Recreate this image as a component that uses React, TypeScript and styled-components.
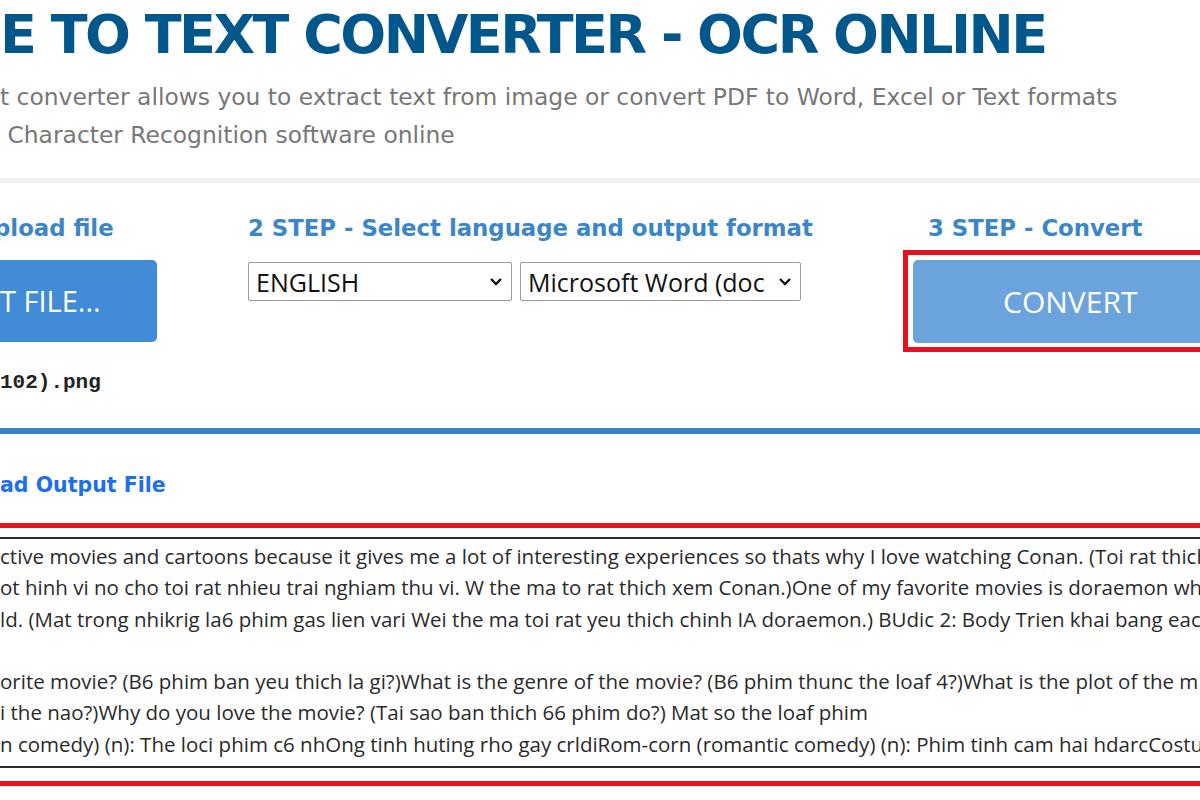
import styled, { createGlobalStyle } from 'styled-components'

const GlobalStyle = createGlobalStyle`
  html, body {
    margin: 0;
    padding: 0;
    background: #ffffff;
    overflow: hidden;
  }
`

const Page = styled.div`
  width: 1200px;
  height: 800px;
  overflow: hidden;
  font-family: 'DejaVu Sans', Verdana, sans-serif;
`

const Title = styled.h1`
  margin: 0;
  padding-top: 4px;
  height: 62px;
  font-size: 54px;
  line-height: 62px;
  font-weight: bold;
  color: #00578b;
  white-space: nowrap;
  letter-spacing: -2.5px;
`

const Subtitle = styled.p`
  margin: 0;
  padding-top: 12px;
  font-size: 23.4px;
  line-height: 38px;
  color: #777777;
  white-space: nowrap;
`

const Divider = styled.div`
  margin-top: 24px;
  height: 5px;
  background: #f1f1f1;
`

const Steps = styled.div`
  display: flex;
  height: 245px;
`

const Column = styled.div<{ $width?: number }>`
  display: flex;
  flex-direction: column;
  ${(p) => (p.$width ? `width: ${p.$width}px; flex: none;` : 'flex: 1;')}
`

const StepTitle = styled.div<{ $indent?: number }>`
  margin-top: 30px;
  text-indent: ${(p) => p.$indent ?? 0}px;
  height: 30px;
  font-size: 22.8px;
  line-height: 30px;
  font-weight: bold;
  color: #3b86c8;
  white-space: nowrap;
`

const SelectFile = styled.div`
  margin-top: 17px;
  width: 157px;
  height: 82px;
  box-sizing: border-box;
  background: #428bd6;
  border-radius: 0 5px 5px 0;
  color: #ffffff;
  font-family: 'Open Sans', 'Noto Sans', sans-serif;
  font-size: 29px;
  line-height: 82px;
  white-space: nowrap;
  overflow: hidden;
`

const FileName = styled.div`
  margin-top: 30px;
  font-family: 'Liberation Mono', 'Courier New', monospace;
  font-weight: bold;
  font-size: 21px;
  line-height: 22px;
  color: #222222;
`

const SelectRow = styled.div`
  display: flex;
  gap: 8px;
  margin-top: 19px;
`

const Dropdown = styled.div<{ $width: number }>`
  display: flex;
  align-items: center;
  justify-content: space-between;
  width: ${(p) => p.$width}px;
  height: 39px;
  box-sizing: border-box;
  padding: 0 8px 0 7px;
  border: 1.5px solid #9a9a9a;
  border-radius: 2px;
  background: #ffffff;
  font-family: 'Open Sans', 'Noto Sans', sans-serif;
  font-size: 25px;
  color: #111111;
  white-space: nowrap;
  overflow: hidden;
`

const Chevron = () => (
  <svg width="14" height="10" viewBox="0 0 14 10" style={{ flex: 'none' }}>
    <path d="M2 2 L7 7 L12 2" fill="none" stroke="#111" strokeWidth="2.4" />
  </svg>
)

const ConvertFrame = styled.div`
  margin-top: 7px;
  height: 102px;
  box-sizing: border-box;
  border: 5px solid #e8101e;
  border-right: none;
  padding: 5px 0 4px 5px;
`

const ConvertButton = styled.div`
  height: 100%;
  background: #6ba4dd;
  border-radius: 5px 0 0 5px;
  color: #ffffff;
  font-family: 'Open Sans', 'Noto Sans', sans-serif;
  font-size: 30px;
  display: flex;
  align-items: center;
  padding-left: 90px;
`

const BlueBar = styled.div`
  height: 6px;
  background: #3a82c6;
`

const OutputLink = styled.div`
  margin-top: 36px;
  height: 30px;
  font-size: 20.5px;
  line-height: 30px;
  font-weight: bold;
  color: #1e6feb;
  white-space: nowrap;
`

const RedFrame = styled.div`
  margin-top: 23px;
  border-top: 5px solid #ea1320;
  border-bottom: 5px solid #ea1320;
  padding: 9px 0 13px;
`

const TextBox = styled.div`
  border-top: 2px solid #2a2a2a;
  border-bottom: 2px solid #2a2a2a;
  padding: 2px 0 6px;
  font-family: 'Open Sans', 'Noto Sans', sans-serif;
  font-size: 20.5px;
  line-height: 31.3px;
  color: #2a2a2a;
`

const TextLine = styled.div`
  height: 31.3px;
  white-space: pre;
  overflow: hidden;
`

const lines = [
  'ctive movies and cartoons because it gives me a lot of interesting experiences so thats why I love watching Conan. (Toi rat thich',
  'ot hinh vi no cho toi rat nhieu trai nghiam thu vi. W the ma to rat thich xem Conan.)One of my favorite movies is doraemon wh',
  'ld. (Mat trong nhikrig la6 phim gas lien vari Wei the ma toi rat yeu thich chinh IA doraemon.) BUdic 2: Body Trien khai bang each',
  '',
  'orite movie? (B6 phim ban yeu thich la gi?)What is the genre of the movie? (B6 phim thunc the loaf 4?)What is the plot of the m',
  'i the nao?)Why do you love the movie? (Tai sao ban thich 66 phim do?) Mat so the loaf phim',
  'n comedy) (n): The loci phim c6 nhOng tinh huting rho gay crldiRom-corn (romantic comedy) (n): Phim tinh cam hai hdarcCostu',
]

export default function App() {
  return (
    <Page>
      <GlobalStyle />
      <Title>E TO TEXT CONVERTER - OCR ONLINE</Title>
      <Subtitle>
        t converter allows you to extract text from image or convert PDF to Word, Excel or Text formats
        <br />
        &nbsp;Character Recognition software online
      </Subtitle>
      <Divider />
      <Steps>
        <Column $width={248}>
          <StepTitle $indent={-6}>pload file</StepTitle>
          <SelectFile>T FILE...</SelectFile>
          <FileName>102).png</FileName>
        </Column>
        <Column $width={655}>
          <StepTitle>2 STEP - Select language and output format</StepTitle>
          <SelectRow>
            <Dropdown $width={264}>
              ENGLISH
              <Chevron />
            </Dropdown>
            <Dropdown $width={281}>
              Microsoft Word (doc
              <Chevron />
            </Dropdown>
          </SelectRow>
        </Column>
        <Column>
          <StepTitle $indent={25}>3 STEP - Convert</StepTitle>
          <ConvertFrame>
            <ConvertButton>CONVERT</ConvertButton>
          </ConvertFrame>
        </Column>
      </Steps>
      <BlueBar />
      <OutputLink>ad Output File</OutputLink>
      <RedFrame>
        <TextBox>
          {lines.map((l, i) => (
            <TextLine key={i}>{l}</TextLine>
          ))}
        </TextBox>
      </RedFrame>
    </Page>
  )
}
